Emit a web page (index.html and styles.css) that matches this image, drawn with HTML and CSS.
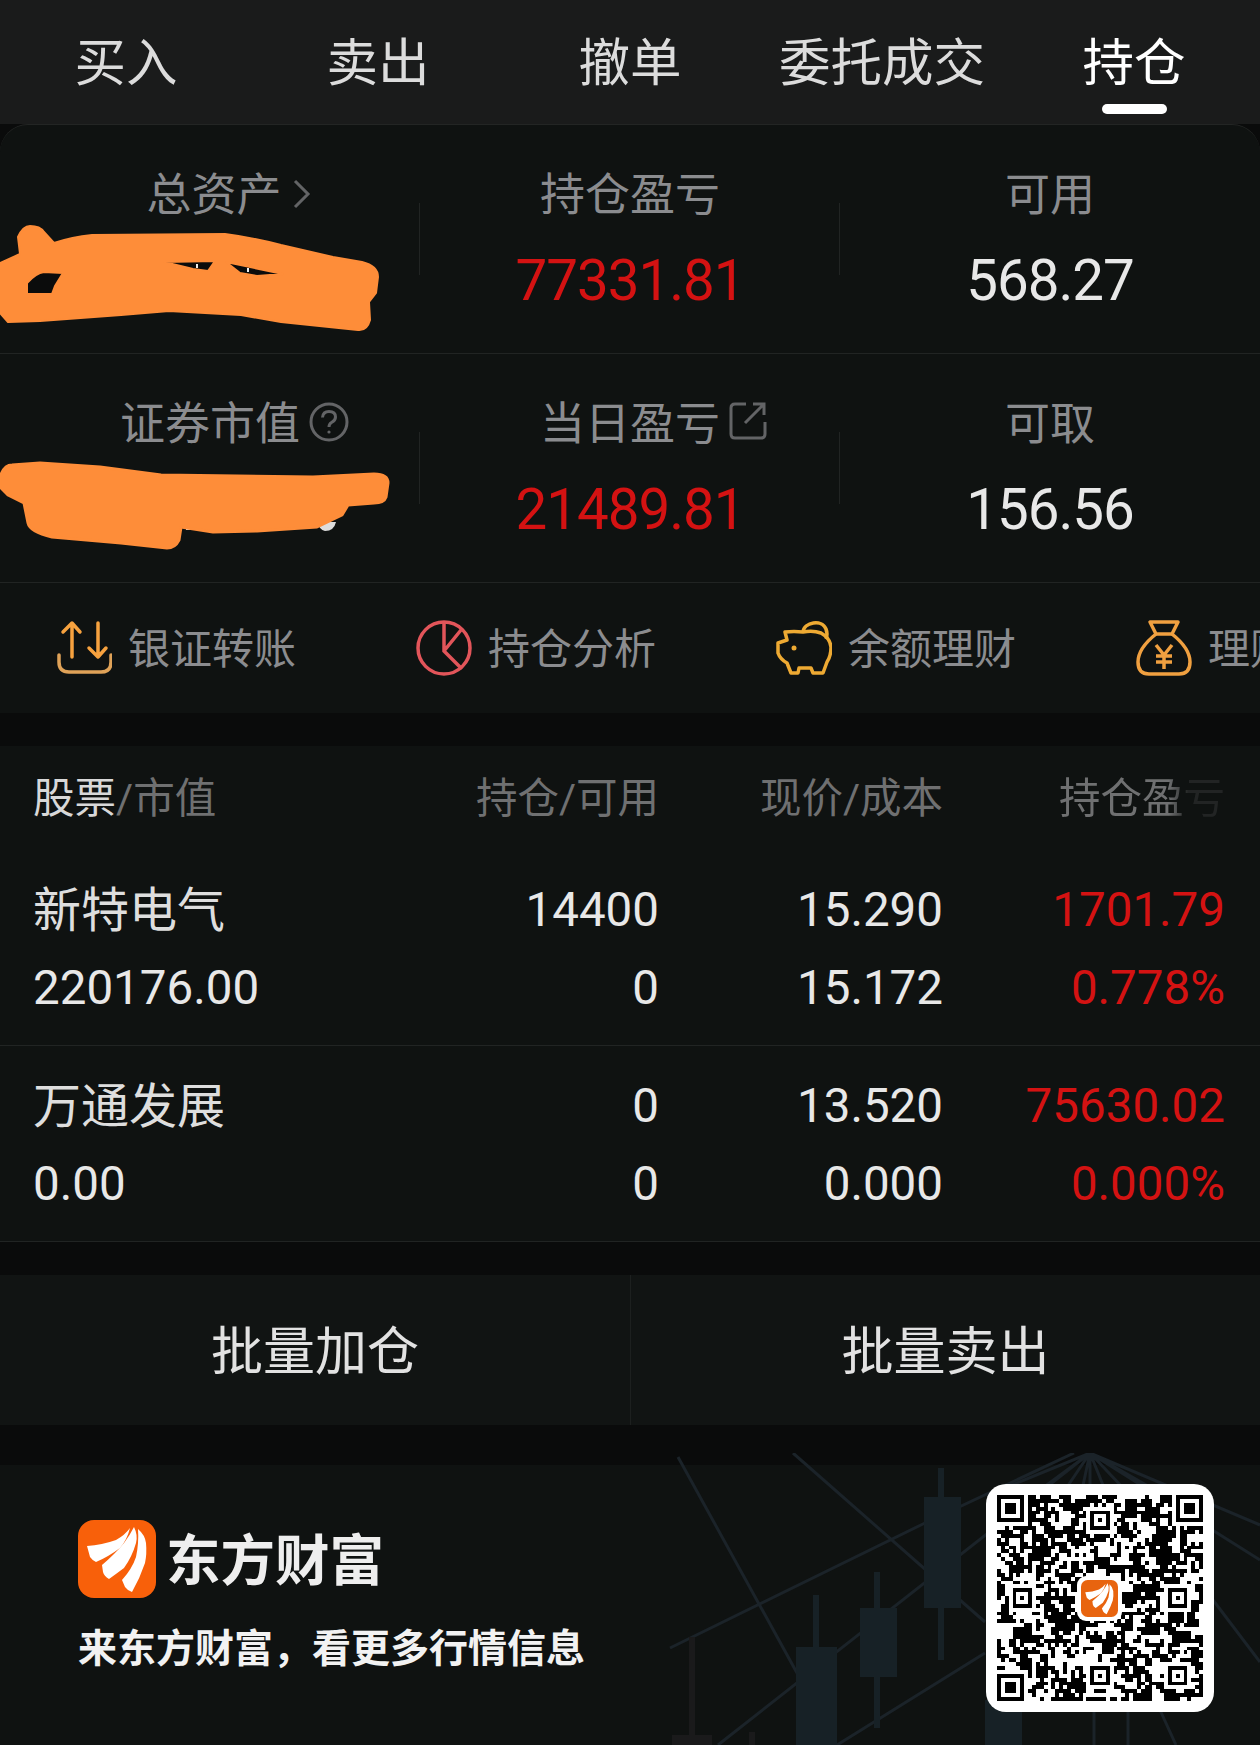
FILE: index.html
```html
<!DOCTYPE html>
<html lang="zh-CN">
  <head>
    <meta charset="utf-8">
    <meta name="viewport" content="width=device-width, initial-scale=1">
    <title>持仓</title>
    <link rel="stylesheet" href="styles.css">
  </head>
  <body>
    <svg class="defs" width="0" height="0">
      <symbol id="feather" viewBox="0 0 78 78">
        <path fill="#fff" d="M9 26Q24 25 38 20Q47 15 52 8Q49 20 42 28Q30 37 18 42Q14 40 12 37Z"/>
        <path fill="#fff" d="M24 45Q37 34 46 23Q52 15 56 7Q60 15 58 23Q54 37 46 48Q38 54 31 59Q26 56 25 52Z"/>
        <path fill="#fff" d="M44 60Q54 49 58 37Q61 23 60 9Q67 15 68 23Q69 34 67 43Q62 58 54 72Q49 70 47 67Z"/>
      </symbol>
    </svg>

    <div class="page">
      <nav class="tabs">
        <a class="tab">买入</a>
        <a class="tab">卖出</a>
        <a class="tab">撤单</a>
        <a class="tab">委托成交</a>
        <a class="tab active">持仓</a>
      </nav>

      <section class="panel">
        <svg class="scribble" width="400" height="430" viewBox="0 124 400 430">
          <path fill="#0b0c0c" d="M20 265H70V300H20Z"/>
          <path fill="#0b0c0c" d="M160 258H285V280H160Z"/>
          <path fill="#fe8d39" fill-rule="evenodd" stroke="#fe8d39" stroke-width="2" stroke-linejoin="round" d="M18 237Q23 226 30 226Q40 226 44 232L54 243Q72 237 92 235L225 234Q255 238 281 245L333 257L362 262Q378 266 378 277L376 293L369 302L370 320Q367 331 358 330L281 322L241 315L169 311L121 315L40 321L8 322L0 313V263L20 254Z M27 283Q36 273 44 272L63 273L55 286L52 294H27Z M164 262L215 261L208 271L193 269Z M226 262L283 274L257 276L240 273Z"/>
          <path stroke="#eee" stroke-width="2" d="M197 264V268M248 268V272"/>
          <path fill="#ddd" d="M318 522H336Q334 531 325 531Q319 530 318 522ZM186 524H192V530H186Z"/>
          <path fill="#fe8d39" stroke="#fe8d39" stroke-width="3" stroke-linejoin="round" d="M0 477Q4 465 12 465L40 463L100 467L161 475L313 477L374 474Q388 474 388 483L386 497Q384 503 374 503L348 505L342 515L317 527L257 531L213 532L181 527L179 540Q175 548 167 548L121 543L52 537Q30 532 28 523L24 503L8 495L0 487Z"/>
        </svg>

        <div class="stats">
          <div class="stat">
            <span class="label assets">总资产
              <svg class="label-icon chevron" width="18" height="30" viewBox="0 0 18 30"><path d="M2 2L15 15L2 28"/></svg>
            </span>
            <span class="value">&nbsp;</span>
          </div>
          <div class="stat">
            <span class="label">持仓盈亏</span>
            <span class="value up">77331.81</span>
          </div>
          <div class="stat">
            <span class="label">可用</span>
            <span class="value">568.27</span>
          </div>
        </div>

        <div class="stats">
          <div class="stat">
            <span class="label">证券市值
              <svg class="label-icon" width="40" height="40" viewBox="0 0 40 40">
                <circle cx="20" cy="20" r="18"/>
                <path d="M13.5 15.5Q14 9.5 20 9.5Q26.5 9.5 26.5 15Q26.5 18.5 22.5 20.5Q20 22 20 25"/>
                <circle class="dot" cx="20" cy="30" r="1.6"/>
              </svg>
            </span>
            <span class="value">&nbsp;</span>
          </div>
          <div class="stat">
            <span class="label">当日盈亏
              <svg class="label-icon" width="38" height="38" viewBox="0 0 38 38">
                <path d="M17 2H6Q2 2 2 6V32Q2 36 6 36H32Q36 36 36 32V20"/>
                <path d="M16 21L34 3M24 2H35V13"/>
              </svg>
            </span>
            <span class="value up">21489.81</span>
          </div>
          <div class="stat">
            <span class="label">可取</span>
            <span class="value">156.56</span>
          </div>
        </div>

        <div class="quick">
          <a class="quick-item">
            <svg width="56" height="56" viewBox="0 0 56 56" fill="none" stroke-linecap="round" stroke-linejoin="round" stroke-width="3.5">
              <path stroke="#f7a23f" d="M16 37V3M7 12L16 3L24 12M42 3V37M33 28L42 37L50 28"/>
              <path stroke="#dfa258" d="M3 35V42Q3 52 13 52H45Q55 52 55 42V35"/>
            </svg>
            银证转账
          </a>
          <a class="quick-item">
            <svg width="56" height="56" viewBox="0 0 56 56" fill="none" stroke="#e2555a" stroke-width="3.5">
              <circle cx="28" cy="28" r="26"/>
              <path d="M28 3V31L46 49M28 31L45 10"/>
            </svg>
            持仓分析
          </a>
          <a class="quick-item">
            <svg width="56" height="56" viewBox="0 0 56 56" fill="none" stroke="#eeaa33" stroke-width="3.5" stroke-linejoin="round">
              <path d="M9 12Q18 11 27 12Q37 10 45 13Q54 18 55 27Q55 36 51 42L47 53H37L35 48H23L22 53H15L11 43Q4 39 2 33V23L11 20Z"/>
              <path d="M27 12C28 2 46 -1 50 9Q52 14 50 19"/>
              <circle cx="18" cy="28" r="2.5" fill="#eeaa33" stroke="none"/>
            </svg>
            余额理财
          </a>
          <a class="quick-item">
            <svg width="56" height="56" viewBox="0 0 56 56" fill="none" stroke="#f0a040" stroke-width="3.5" stroke-linejoin="round">
              <path d="M14 2H42L36 14H20Z"/>
              <path d="M20 14C10 22 2 32 2 42C2 50 6 54 13 54H43C50 54 54 50 54 42C54 32 46 22 36 14"/>
              <path d="M20 25L28 35L36 25M20 36H36M20 42H36M28 35V49"/>
            </svg>
            理财
          </a>
        </div>
      </section>

      <section class="holdings">
        <div class="grid head">
          <div><span class="head-main">股票</span>/市值</div>
          <div class="num">持仓/可用</div>
          <div class="num">现价/成本</div>
          <div class="num"><span class="fade">持仓盈亏</span></div>
        </div>
        <div class="grid row">
          <div class="cell"><span class="name">新特电气</span><span>220176.00</span></div>
          <div class="cell num"><span>14400</span><span>0</span></div>
          <div class="cell num"><span>15.290</span><span>15.172</span></div>
          <div class="cell num up"><span>1701.79</span><span>0.778%</span></div>
        </div>
        <div class="grid row">
          <div class="cell"><span class="name">万通发展</span><span>0.00</span></div>
          <div class="cell num"><span>0</span><span>0</span></div>
          <div class="cell num"><span>13.520</span><span>0.000</span></div>
          <div class="cell num up"><span>75630.02</span><span>0.000%</span></div>
        </div>
      </section>

      <section class="batch">
        <a class="batch-btn">批量加仓</a>
        <a class="batch-btn">批量卖出</a>
      </section>

      <footer class="promo">
        <svg class="promo-bg" width="600" height="292" viewBox="660 1453 600 292" fill="none">
          <g stroke="#1b2329" stroke-width="3">
            <path d="M678 1457L797 1673M793 1453L985 1622M1074 1453L925 1523L670 1648"/>
            <path d="M1090 1453L718 1745M985 1653L837 1745"/>
            <path d="M1090 1453L1000 1490M1090 1453L1040 1490M1090 1453L1065 1490M1090 1453L1082 1490M1090 1453V1490M1090 1453L1105 1490M1090 1453L1125 1490M1090 1453L1155 1490M1090 1453L1260 1525M1090 1453L1260 1560"/>
            <path d="M1213 1600L1260 1662M1094 1710V1745M1128 1710V1745M1160 1710L1176 1745"/>
          </g>
          <g fill="#172126">
            <path d="M938 1468H944V1660H938ZM924 1497H961V1608H924Z"/>
            <path d="M874 1572H880V1728H874ZM860 1608H897V1677H860Z"/>
            <path d="M813 1595H819V1650H813ZM796 1647H837V1745H796Z"/>
            <path d="M985 1700H1022V1745H985Z"/>
          </g>
          <g fill="#1a1a1b">
            <path d="M689 1637H695V1736H689ZM672 1735H712V1745H672Z"/>
            <path d="M749 1732H755V1745H749Z"/>
          </g>
        </svg>

        <div class="promo-text">
          <div class="brand">
            <svg class="logo" width="78" height="78" viewBox="0 0 78 78">
              <rect width="78" height="78" rx="16" fill="#f8600a"/>
              <use href="#feather"/>
            </svg>
            <span class="brand-name">东方财富</span>
          </div>
          <p class="slogan">来东方财富，看更多行情信息</p>
        </div>

        <div class="qr">
          <svg id="qr" width="206" height="206" viewBox="0 0 53 53" shape-rendering="crispEdges"></svg>
          <div class="qr-logo">
            <svg width="37" height="37" viewBox="0 0 78 78">
              <rect width="78" height="78" rx="14" fill="#e8640f"/>
              <use href="#feather"/>
            </svg>
          </div>
        </div>
      </footer>
    </div>
    <script src="qr.js"></script>
  </body>
</html>
```

FILE: styles.css
```css
* {
  box-sizing: border-box;
}

body {
  margin: 0;
  width: 1260px;
  height: 1745px;
  overflow: hidden;
  background: #0a0b0b;
  font-family: "Noto Sans CJK SC", sans-serif;
  color: #e8e8e8;
}

.defs {
  position: absolute;
}

.page {
  position: relative;
}

/* top tabs */
.tabs {
  display: grid;
  grid-template-columns: repeat(5, 252px);
  height: 124px;
  background: #1a1b1b;
}

.tab {
  position: relative;
  text-align: center;
  font-size: 51.5px;
  line-height: 118px;
  color: #dcdcdc;
}

.tab.active {
  color: #fff;
}

.tab.active::after {
  content: "";
  position: absolute;
  left: 94px;
  top: 104px;
  width: 65px;
  height: 10px;
  border-radius: 5px;
  background: #fff;
}

/* asset panel */
.panel {
  position: relative;
  background: #0f1211;
  border-top: 1px solid #232524;
  border-radius: 28px 28px 0 0;
}

.scribble {
  position: absolute;
  left: 0;
  top: -1px;
  z-index: 2;
}

.stats {
  display: grid;
  grid-template-columns: repeat(3, 420px);
  height: 229px;
  border-bottom: 1px solid #212423;
}

.stat {
  position: relative;
  display: flex;
  flex-direction: column;
  align-items: center;
  padding-top: 37px;
}

.stat + .stat::before {
  content: "";
  position: absolute;
  left: -1px;
  top: 78px;
  width: 1px;
  height: 72px;
  background: #212423;
}

.label {
  position: relative;
  font-size: 45px;
  line-height: 60px;
  color: #8b8c8f;
}

.label.assets {
  margin-left: 8px;
}

.label-icon {
  position: absolute;
  left: 100%;
  top: 11px;
  margin-left: 9px;
  fill: none;
  stroke: #636466;
  stroke-width: 3;
}

.label-icon .dot {
  fill: #636466;
  stroke: none;
}

.label-icon.chevron {
  top: 17px;
  margin-left: 11px;
}

.value {
  margin-top: 26px;
  font-family: Roboto, sans-serif;
  font-size: 56.5px;
  line-height: 66px;
  letter-spacing: -1px;
  color: #e8e8e8;
}

.up {
  color: #d41212;
}

.value.up {
  color: #d41212;
}

/* quick links */
.quick {
  display: flex;
  height: 130px;
  padding-left: 56px;
  overflow: hidden;
}

.quick-item {
  flex: 0 0 360px;
  display: flex;
  align-items: center;
  gap: 16px;
  padding-bottom: 6px;
  font-size: 42px;
  color: #8b8c8f;
}

.quick-item svg {
  flex: none;
  margin-top: 6px;
}

/* holdings table */
.holdings {
  margin-top: 33px;
  background: #0f1211;
}

.grid {
  display: grid;
  grid-template-columns: 1fr 284px 284px 282px;
  padding: 0 35px 0 33px;
}

.head {
  height: 104px;
  padding-bottom: 6px;
  align-items: center;
  font-size: 41.5px;
  color: #6f7071;
  font-family: Roboto, "Noto Sans CJK SC", sans-serif;
}

.head-main {
  color: #d8d8d8;
}

.num {
  text-align: right;
}

.fade {
  display: inline-block;
  -webkit-mask-image: linear-gradient(90deg, #000 66%, rgba(0, 0, 0, 0.2) 78%);
  mask-image: linear-gradient(90deg, #000 66%, rgba(0, 0, 0, 0.2) 78%);
}

.row {
  padding-top: 21px;
  padding-bottom: 18px;
  border-bottom: 1px solid #212423;
  font-family: Roboto, "Noto Sans CJK SC", sans-serif;
  font-size: 47.5px;
  line-height: 78px;
}

.cell span {
  display: block;
}

.cell .name {
  margin-top: -4px;
  margin-bottom: 4px;
  font-family: "Noto Sans CJK SC", sans-serif;
  font-size: 48px;
  color: #dedede;
}

/* batch buttons */
.batch {
  display: grid;
  grid-template-columns: 1fr 1fr;
  height: 150px;
  margin-top: 33px;
  background: #111413;
}

.batch-btn {
  text-align: center;
  font-size: 52px;
  line-height: 146px;
  color: #e2e2e2;
}

.batch-btn + .batch-btn {
  border-left: 1px solid #1d201f;
}

/* promo footer */
.promo {
  position: relative;
  display: flex;
  justify-content: space-between;
  height: 280px;
  margin-top: 40px;
  padding: 0 46px 0 78px;
  background: #0f1211;
}

.promo-bg {
  position: absolute;
  left: 660px;
  top: -12px;
}

.promo-text {
  position: relative;
  padding-top: 55px;
}

.brand {
  display: flex;
  align-items: center;
  gap: 10px;
}

.brand-name {
  padding-bottom: 4px;
  font-size: 54.5px;
  font-weight: 700;
  line-height: 1;
  color: #eee;
}

.slogan {
  margin: 19px 0 0;
  font-size: 39px;
  font-weight: 700;
  line-height: 56px;
  color: #f2f2f2;
}

.qr {
  position: relative;
  display: flex;
  align-items: center;
  justify-content: center;
  width: 228px;
  height: 228px;
  margin-top: 19px;
  border-radius: 20px;
  background: #fff;
}

.qr-logo {
  position: absolute;
  left: 91px;
  top: 92px;
  display: flex;
  align-items: center;
  justify-content: center;
  width: 45px;
  height: 45px;
  border-radius: 9px;
  background: #fff;
}
```

FILE: qr.js
```js
// draws a made up qr code, modules come from a small seeded generator
const size = 53;
const cells = [];
let seed = 20240;

function rand() {
  seed = (seed * 1103515245 + 12345) % 2147483648;
  return seed / 2147483648;
}

for (let y = 0; y < size; y++) {
  cells.push([]);
  for (let x = 0; x < size; x++) {
    const prev = x > 0 ? cells[y][x - 1] : 0;
    const up = y > 0 ? cells[y - 1][x] : 0;
    cells[y].push(rand() < 0.38 + 0.16 * (prev + up) ? 1 : 0);
  }
}

function square(cx, cy, r, rings) {
  for (let y = -r - 1; y <= r + 1; y++) {
    for (let x = -r - 1; x <= r + 1; x++) {
      const px = cx + x;
      const py = cy + y;
      if (px < 0 || py < 0 || px >= size || py >= size) continue;
      const d = Math.max(Math.abs(x), Math.abs(y));
      cells[py][px] = rings.includes(d) ? 1 : 0;
    }
  }
}

// finders
square(3, 3, 3, [0, 1, 3]);
square(size - 4, 3, 3, [0, 1, 3]);
square(3, size - 4, 3, [0, 1, 3]);

// alignment marks
[[26, 6], [6, 26], [46, 26], [26, 46], [46, 46]].forEach(([x, y]) => {
  square(x, y, 2, [0, 2]);
});

let d = "";
cells.forEach((row, y) => {
  row.forEach((on, x) => {
    if (on) d += `M${x} ${y}h1v1h-1z`;
  });
});

const path = document.createElementNS("http://www.w3.org/2000/svg", "path");
path.setAttribute("d", d);
path.setAttribute("fill", "#000");
document.querySelector("#qr").appendChild(path);
```
